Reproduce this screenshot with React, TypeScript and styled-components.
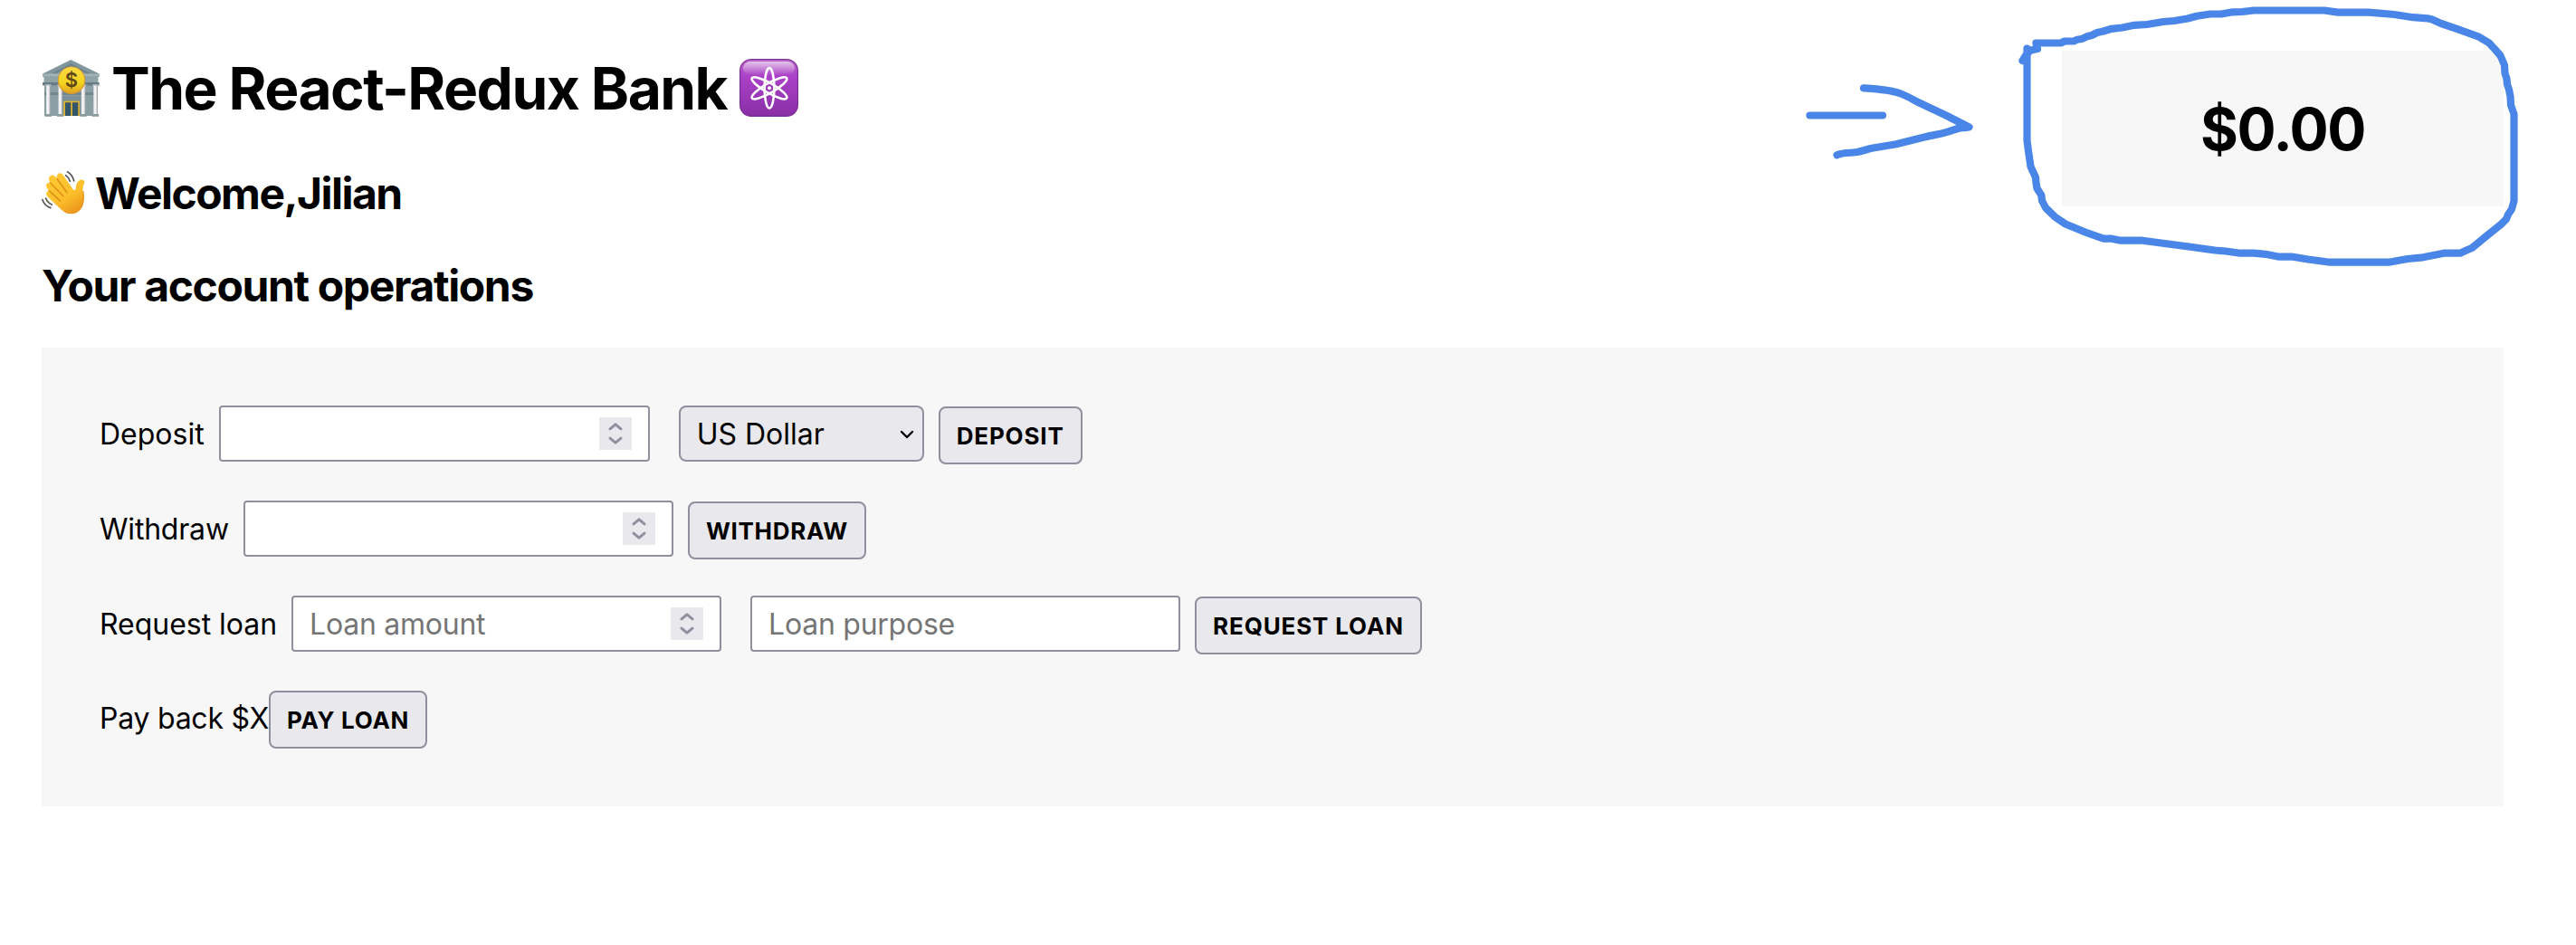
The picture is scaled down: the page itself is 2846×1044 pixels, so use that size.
import React from "react";
import styled, { createGlobalStyle } from "styled-components";

const GlobalStyle = createGlobalStyle`
  * { box-sizing: border-box; }
  body {
    margin: 0;
    background: #fff;
    color: #000;
    font-family: Inter, "Liberation Sans", sans-serif;
    font-size: 32px;
  }
`;

const Page = styled.main`
  position: relative;
  min-height: 1044px;
  padding: 56px 80px 0 46px;
`;

const Header = styled.header`
  display: flex;
  justify-content: space-between;
  align-items: flex-start;
`;

const Headings = styled.div`
  display: flex;
  flex-direction: column;
`;

const Title = styled.h1`
  display: flex;
  align-items: center;
  height: 82px;
  margin: 0 0 0 1px;
  font-size: 64px;
  font-weight: 700;
  letter-spacing: -1.56px;
  white-space: nowrap;
`;

const TitleText = styled.span`
  margin: 0 14px 0 13px;
`;

const Subtitle = styled.h2<{ $top: number; $tracking: number }>`
  display: flex;
  align-items: center;
  height: 60px;
  margin: ${(p) => p.$top}px 0 0;
  padding-bottom: 2px;
  font-size: 48px;
  font-weight: 700;
  letter-spacing: ${(p) => p.$tracking}px;
  white-space: nowrap;
`;

const Emoji = styled.svg<{ $w: number; $h: number; $gap?: number }>`
  flex: none;
  display: block;
  width: ${(p) => p.$w}px;
  height: ${(p) => p.$h}px;
  margin-right: ${(p) => p.$gap ?? 0}px;
  overflow: visible;
`;

const Balance = styled.div`
  display: flex;
  align-items: center;
  justify-content: center;
  width: 488px;
  height: 172px;
  background: #f7f7f7;
  font-size: 64px;
  font-weight: 700;
  letter-spacing: -1.45px;
`;

const Operations = styled.section`
  display: flex;
  flex-direction: column;
  gap: 40px;
  margin-top: 38px;
  padding: 64px;
  background: #f7f7f7;
`;

const Row = styled.div`
  display: flex;
  align-items: flex-start;
`;

const Label = styled.label<{ $gap?: number; $tracking?: number; $line?: number }>`
  margin-right: ${(p) => p.$gap ?? 16}px;
  line-height: ${(p) => p.$line ?? 64}px;
  letter-spacing: ${(p) => p.$tracking ?? 0}px;
  white-space: nowrap;
`;

const Field = styled.div<{ $gap: number; $width?: number }>`
  display: flex;
  align-items: center;
  width: ${(p) => p.$width ?? 475}px;
  height: 62px;
  margin-right: ${(p) => p.$gap}px;
  padding: 0 18px;
  border: 2px solid #8f8f9d;
  border-radius: 4px;
  background: #fff;
`;

const Input = styled.input`
  flex: 1;
  min-width: 0;
  height: 58px;
  padding: 0;
  border: 0;
  outline: 0;
  background: transparent;
  font: inherit;
  letter-spacing: -0.25px;
  &::placeholder {
    color: #757575;
    opacity: 1;
  }
`;

const Spinner = styled.svg`
  flex: none;
  width: 36px;
  height: 36px;
  background: #e9e9ed;
`;

const Select = styled.div`
  display: flex;
  align-items: center;
  justify-content: space-between;
  width: 271px;
  height: 62px;
  margin-right: 16px;
  padding: 1px 9px 0 18px;
  border: 2px solid #8f8f9d;
  border-radius: 8px;
  background: #e9e9ed;
`;

const Chevron = styled.svg`
  width: 16px;
  height: 10px;
  margin-top: 1px;
`;

const Button = styled.button<{ $top?: number; $tracking?: number }>`
  height: 64px;
  margin: ${(p) => p.$top ?? 1}px 0 0;
  padding: 0 18px;
  border: 2px solid #8f8f9d;
  border-radius: 8px;
  background: #e9e9ed;
  color: #000;
  font: 700 26px Inter, "Liberation Sans", sans-serif;
  letter-spacing: ${(p) => p.$tracking ?? 0.85}px;
  text-transform: uppercase;
  white-space: nowrap;
`;

const Ink = styled.svg`
  position: absolute;
  top: 0;
  left: 1980px;
  width: 820px;
  height: 310px;
  pointer-events: none;
`;

const BankIcon = () => (
  <Emoji $w={63} $h={63} viewBox="0 0 63 63" role="img" aria-label="bank">
    <defs>
      <linearGradient id="coin" x1="0" y1="0" x2="0" y2="1">
        <stop offset="0" stopColor="#ffd944" />
        <stop offset="0.6" stopColor="#f3d51f" />
        <stop offset="1" stopColor="#e2a321" />
      </linearGradient>
      <linearGradient id="pillar" x1="0" y1="0" x2="1" y2="0">
        <stop offset="0" stopColor="#d5d7da" />
        <stop offset="0.45" stopColor="#ffffff" />
        <stop offset="1" stopColor="#b9b5bb" />
      </linearGradient>
    </defs>
    <rect x="2" y="26" width="59" height="36" fill="#8b9ea3" />
    <rect x="2" y="36" width="59" height="3" fill="#72868e" />
    <path d="M31.3 0L62.7 15.5V19H0V15.5Z" fill="#82979d" />
    <path d="M31.3 4L53 15.3H10Z" fill="#6d838c" />
    <path d="M31.3 6.500L48 15.300H15Z" fill="#8b9fa4" />
    <rect x="0" y="15.5" width="62.7" height="3" fill="#a4b4b6" />
    <rect x="1.5" y="18.5" width="60" height="6.5" fill="#8fa3a7" />
    <rect x="0" y="25" width="62.7" height="3.4" fill="#667b83" />
    <rect x="21.7" y="40" width="20.6" height="22" fill="#7c9097" />
    {[4, 17.4, 42.8, 56.2].map((x) => (
      <g key={x}>
        <rect x={x - 1} y="27" width="6.4" height="2.4" fill="#a9b5b9" />
        <rect x={x} y="28.6" width="4.4" height="32" fill="url(#pillar)" />
        <rect x={x - 1.5} y="60" width="7.4" height="2.8" fill="#8b9ca1" />
      </g>
    ))}
    <rect x="23.3" y="45.6" width="17.6" height="16.4" fill="#e2b32b" />
    <rect x="25" y="47.2" width="6.3" height="14.8" fill="#34566a" />
    <rect x="33" y="47.2" width="6.3" height="14.8" fill="#34566a" />
    <circle cx="32" cy="22.7" r="15.2" fill="#d9992a" />
    <circle cx="32" cy="22.4" r="14.2" fill="url(#coin)" />
    <text x="32" y="30" textAnchor="middle" fontFamily="Inter, sans-serif" fontSize="22" fontWeight="600" letterSpacing="0" fill="#5d4619">$</text>
  </Emoji>
);

const AtomIcon = () => (
  <Emoji $w={65} $h={64} viewBox="0 0 65 64" role="img" aria-label="atom">
    <defs>
      <linearGradient id="tile" x1="0" y1="0" x2="0" y2="1">
        <stop offset="0" stopColor="#b765c8" />
        <stop offset="0.3" stopColor="#ab41c8" />
        <stop offset="1" stopColor="#8a2fa6" />
      </linearGradient>
      <linearGradient id="gloss" x1="0" y1="0" x2="0" y2="1">
        <stop offset="0" stopColor="#fff" stopOpacity="0.62" />
        <stop offset="1" stopColor="#fff" stopOpacity="0" />
      </linearGradient>
    </defs>
    <rect width="65" height="64" rx="13" fill="#7d2d97" />
    <rect x="1.2" y="1" width="62.6" height="61.4" rx="12" fill="url(#tile)" />
    <rect x="4" y="3" width="57" height="15" rx="8" fill="url(#gloss)" />
    <g fill="none" stroke="#fff" strokeWidth="2.6">
      {[0, 60, -60].map((a) => (
        <ellipse key={a} cx="33" cy="32.3" rx="5.4" ry="22.2" transform={`rotate(${a} 33 32.3)`} />
      ))}
    </g>
    <circle cx="33" cy="32.3" r="2" fill="#fff" />
  </Emoji>
);

const WaveIcon = () => (
  <Emoji $w={49} $h={48} $gap={10} viewBox="0 0 49 48" role="img" aria-label="waving hand">
    <defs>
      <linearGradient id="skin" x1="0" y1="0" x2="0.6" y2="1">
        <stop offset="0" stopColor="#ffca35" />
        <stop offset="0.65" stopColor="#fcc02c" />
        <stop offset="1" stopColor="#ee9b1e" />
      </linearGradient>
    </defs>
    <path
      d="M18 3.2C19.6 1.6 22.4 2.4 23.8 4.5L34.8 20.2C36 21.8 37.4 21.2 37.6 19.4C38 15.8 38.6 12.6 41.2 10.4C43.4 8.8 46.6 9.4 47.3 11.6C47.8 13.4 46 15.2 45.5 18.4C45 22 46.4 25.4 46.7 30C47 39.6 41.6 47.3 32.5 47.3C26.6 47.3 22.4 43.4 18.6 39.8L6.8 28.6C4.8 26.6 4.6 24 6.2 22.6C6.8 22 7.8 21.8 8.4 21.8L6.4 19.6C4.4 17.4 4.6 14.8 6.2 13.6C7.2 12.8 8.4 12.6 9.6 13L8.8 11.6C7.2 9 7.8 6.4 9.8 5.2C11.8 4 14 4.6 15.6 6.8L17.2 8.8C16.2 6.6 16.6 4.6 18 3.2Z"
      fill="url(#skin)"
    />
    <path d="M17.2 8.8L28 23.8M9.6 13L23.8 27.6M8.4 21.8L20.6 33" fill="none" stroke="#df9417" strokeWidth="1.7" strokeLinecap="round" />
    <path d="M46 22C47 30 46 38 41 43C37 47 30 47.500 25 44.500" fill="none" stroke="#e8961f" strokeWidth="1.2" />
    <path
      d="M28.5 .8C32 2.8 34.7 6.5 35.7 10.8M26.6 4.6C29 6.2 30.5 8.3 31.3 11.2M.8 31.6C2.3 36 5.5 39.2 9.8 40.6M4.6 30C6 33.6 8.2 35.7 11.4 37"
      fill="none"
      stroke="#555"
      strokeWidth="1.7"
      strokeLinecap="round"
    />
  </Emoji>
);

const SpinnerIcon = () => (
  <Spinner viewBox="0 0 36 36">
    <path d="M12 12.8L18 7.9L24 12.8M12 23.2L18 28.1L24 23.2" fill="none" stroke="#8f8f9d" strokeWidth="3" strokeLinecap="round" strokeLinejoin="round" />
  </Spinner>
);

function NumberField({ gap, width, placeholder }: { gap: number; width?: number; placeholder?: string }) {
  return (
    <Field $gap={gap} $width={width}>
      <Input inputMode="numeric" placeholder={placeholder} />
      <SpinnerIcon />
    </Field>
  );
}

export default function App() {
  return (
    <Page>
      <GlobalStyle />
      <Header>
        <Headings>
          <Title>
            <BankIcon />
            <TitleText>The React-Redux Bank</TitleText>
            <AtomIcon />
          </Title>
          <Subtitle $top={46} $tracking={-1.52}>
            <WaveIcon />
            <span>Welcome,Jilian</span>
          </Subtitle>
          <Subtitle $top={42} $tracking={-1.37}>Your account operations</Subtitle>
        </Headings>
        <Balance>$0.00</Balance>
      </Header>

      <Operations>
        <Row>
          <Label>Deposit</Label>
          <NumberField gap={32} width={476} />
          <Select>
            <span>US Dollar</span>
            <Chevron viewBox="0 0 16 10">
              <path d="M2 2L8 8L14 2" fill="none" stroke="#000" strokeWidth="2.4" strokeLinecap="round" strokeLinejoin="round" />
            </Chevron>
          </Select>
          <Button>Deposit</Button>
        </Row>
        <Row>
          <Label $tracking={-0.2}>Withdraw</Label>
          <NumberField gap={16} />
          <Button $tracking={0.7}>Withdraw</Button>
        </Row>
        <Row>
          <Label $tracking={-0.03}>Request loan</Label>
          <NumberField gap={32} placeholder="Loan amount" />
          <Field $gap={16}>
            <Input placeholder="Loan purpose" />
          </Field>
          <Button>Request loan</Button>
        </Row>
        <Row>
          <Label $gap={0} $tracking={-0.24} $line={62}>Pay back $X</Label>
          <Button $top={0} $tracking={0.7}>Pay loan</Button>
        </Row>
      </Operations>

      <Ink viewBox="1980 0 820 310" fill="none" stroke="#4a86e8" strokeWidth="8.2" strokeLinecap="round" strokeLinejoin="round">
        <path d="M1999.5 127.5H2080" />
        <path d="M2059 97.3C2073 98.2 2088 99 2100 103.5C2108 106.500 2115 111 2123 114.800L2150 127.500L2175.500 140.500C2169 141.500 2168 140.600 2163 142C2157 144 2152 146 2148 146.800C2141 148.500 2134 149.500 2127 151.300L2095 159.300L2068 163.700C2062 165 2056 167.500 2050 168.300C2044 169.200 2037 168 2029.500 171.300" />
        <path d="M2234.500 67L2239.500 59L2244 55.500L2251 54L2249.500 47.500H2277L2281 45.500H2291L2295 43.700L2300 43L2306 40.300L2311 39L2317 36L2323 34.800L2333 31.800L2345 30.500L2358 27.800L2372 27L2390 24L2402 23L2417 20.500L2427 17.700L2442 15.500H2454L2467 13.300L2477 13L2490 11.500H2568L2583 13.600H2617L2645 16L2666 19.200L2682 20.300L2687 21.500L2697 26L2715 32.200L2738 40.300L2750 47.500L2756 54L2762.500 61.500L2767 72L2767.500 81L2769.500 87L2770 93L2772 99L2773.500 107L2774 116L2777.500 126V222L2775 231L2771 237L2769 242L2763 248L2748 260L2731 274L2725 276.500L2718 279.700H2700L2677 284.300L2660 286L2639 289.700H2574L2550 286.500L2533 283.700H2518L2503 280.800L2490 279.700H2475L2459 277.500L2447 276.500L2420 272.700L2367 265.700H2343L2333 263.700H2324L2307 257.700L2282 247.500L2270 239.300L2260 229.500L2256 221.500L2255.300 215.500L2253 212L2250.500 208L2249.500 202L2249 196L2243.500 184L2241 167L2239.500 155V53.500" />
      </Ink>
    </Page>
  );
}
